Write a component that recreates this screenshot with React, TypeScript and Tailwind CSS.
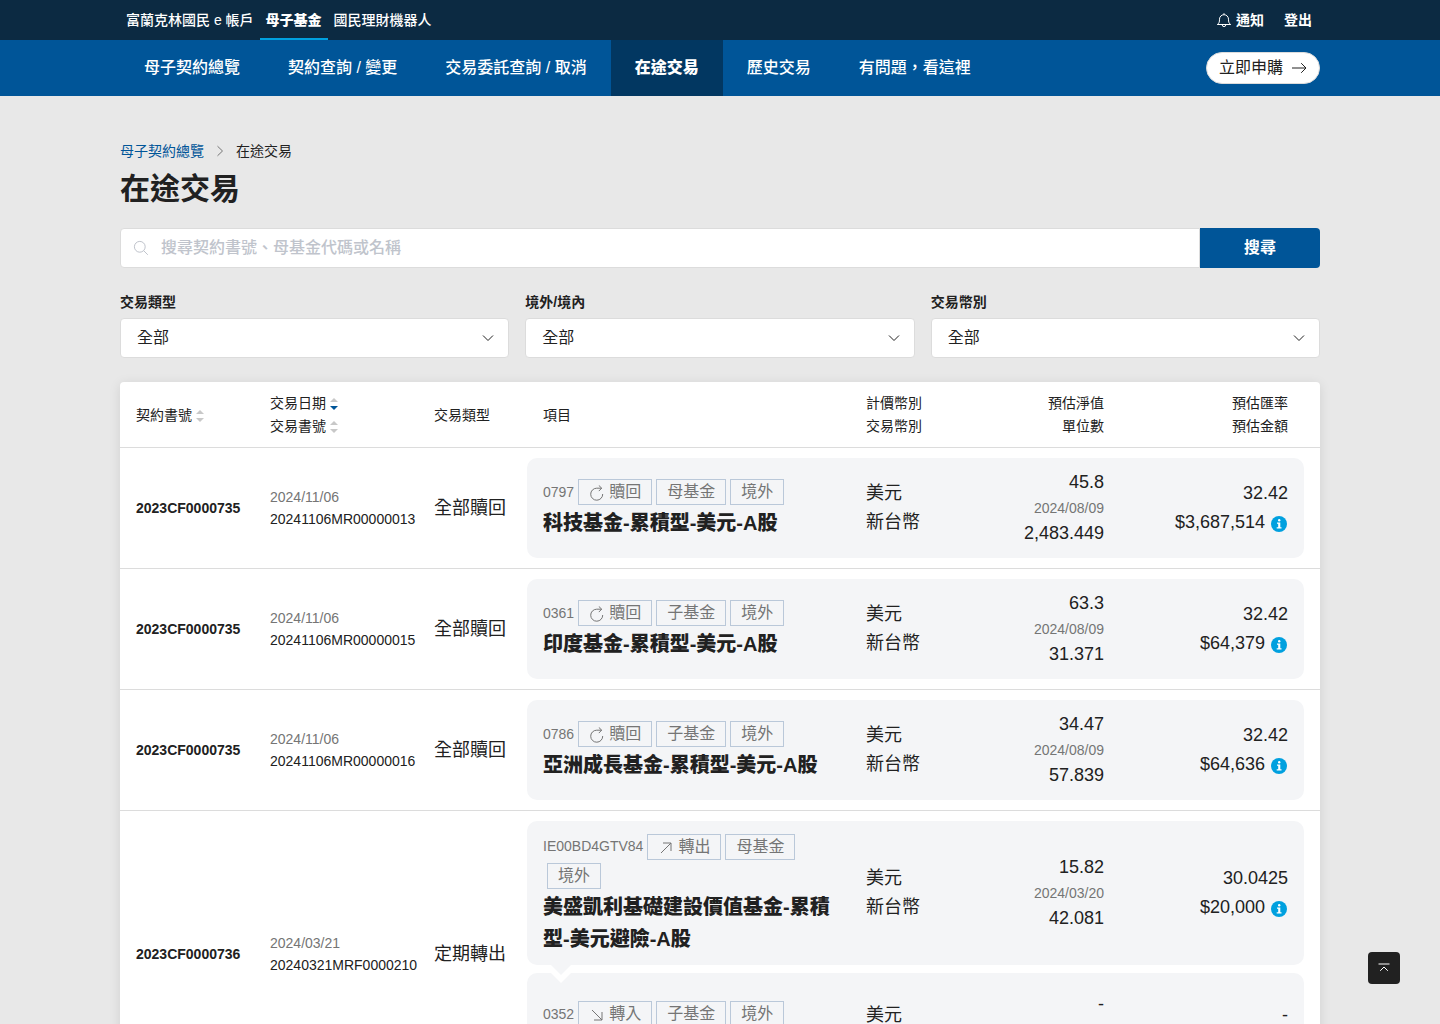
import React from "react";

const CJK = "font-['Liberation_Sans','Noto_Sans_CJK_TC',sans-serif]";

type IconName =
  | "bell" | "right" | "chevronRight" | "chevronDown" | "search"
  | "redeem" | "out" | "in" | "top";

const ICON_PATHS: Record<IconName, string> = {
  bell: "M1.2 12.5h13.6M1.5 12.3c1.6-1 2-2.3 2-5.1a4.5 4.5 0 0 1 9 0c0 2.8.4 4.1 2 5.1M8 2.6V1.2M6.2 12.8a1.8 1.8 0 0 0 3.6 0",
  right: "M1 8h14M10.2 3.2 15 8l-4.8 4.8",
  chevronRight: "M5.5 3.2 10.5 8l-5 4.8",
  chevronDown: "M3 5.5 8 10.5l5-5",
  search: "M12.2 6.8a5.4 5.4 0 1 1-10.8 0a5.4 5.4 0 0 1 10.8 0M10.7 10.7 14.8 14.8",
  redeem: "M13.7 9A6 6 0 1 1 7.7 3.2H12.7M9.8 0.4 12.7 3.2 9.8 6.1",
  out: "M3 13 13 3M5 3h8v8",
  in: "M3 3 13 13M13 5v8H5",
  top: "M2.5 4h11M4.2 10.8 8 7l3.8 3.8",
};

function Icon({ name, className = "size-4" }: { name: IconName; className?: string }) {
  return (
    <svg viewBox="0 0 16 16" fill="none" stroke="currentColor" strokeWidth="1" aria-hidden="true" className={`shrink-0 ${className}`}>
      <path d={ICON_PATHS[name]} />
    </svg>
  );
}

function InfoIcon() {
  return (
    <svg viewBox="0 0 16 16" className="size-4" aria-hidden="true">
      <circle cx="8" cy="8" r="8" fill="#00a0df" />
      <circle cx="8.2" cy="4.3" r="1.2" fill="#fff" />
      <path d="M6 6.6h3.3v4.6h1.2v1.2H5.7v-1.2h1.5V7.8H6z" fill="#fff" />
    </svg>
  );
}

function SortLabel({ text, sorted = false }: { text: string; sorted?: boolean }) {
  return (
    <button type="button" className="flex items-center gap-1">
      {text}
      <svg viewBox="0 0 8 12" className="mt-px h-3 w-2" aria-hidden="true">
        <path d="M0 4 4 0l4 4z" fill="#c8c8c8" />
        <path d="M0 8h8l-4 4z" fill={sorted ? "#005598" : "#c8c8c8"} />
      </svg>
    </button>
  );
}

interface Fund {
  code: string;
  action: string;
  icon: IconName;
  kind: string;
  name?: string;
  nav: string;
  date?: string;
  units: string;
  rate: string;
  amount: string;
}

interface Order {
  contract: string;
  date: string;
  serial: string;
  type: string;
  funds: Fund[];
}

const redeem = (code: string, kind: string, name: string, nav: string, units: string, amount: string): Fund => ({
  code, kind, name, nav, units, amount,
  action: "贖回", icon: "redeem", date: "2024/08/09", rate: "32.42",
});

const ORDERS: Order[] = [
  {
    contract: "2023CF0000735", date: "2024/11/06", serial: "20241106MR00000013", type: "全部贖回",
    funds: [redeem("0797", "母基金", "科技基金-累積型-美元-A股", "45.8", "2,483.449", "$3,687,514")],
  },
  {
    contract: "2023CF0000735", date: "2024/11/06", serial: "20241106MR00000015", type: "全部贖回",
    funds: [redeem("0361", "子基金", "印度基金-累積型-美元-A股", "63.3", "31.371", "$64,379")],
  },
  {
    contract: "2023CF0000735", date: "2024/11/06", serial: "20241106MR00000016", type: "全部贖回",
    funds: [redeem("0786", "子基金", "亞洲成長基金-累積型-美元-A股", "34.47", "57.839", "$64,636")],
  },
  {
    contract: "2023CF0000736", date: "2024/03/21", serial: "20240321MRF0000210", type: "定期轉出",
    funds: [
      {
        code: "IE00BD4GTV84", action: "轉出", icon: "out", kind: "母基金",
        name: "美盛凱利基礎建設價值基金-累積型-美元避險-A股",
        nav: "15.82", date: "2024/03/20", units: "42.081", rate: "30.0425", amount: "$20,000",
      },
      { code: "0352", action: "轉入", icon: "in", kind: "子基金", nav: "-", units: "-", rate: "-", amount: "-" },
    ],
  },
];

function Tag({ icon, children }: { icon?: IconName; children: React.ReactNode }) {
  return (
    <span className="mt-0.5 mb-px ml-1 flex h-[26px] items-center gap-1 border border-[#bac8d9] px-2.5 text-base leading-6">
      {icon && <Icon name={icon} className="mt-0.5 size-4" />}
      {children}
    </span>
  );
}

function FundCard({ fund, linked }: { fund: Fund; linked: boolean }) {
  return (
    <div
      className={`relative grid grid-cols-[1fr_88px_182px_184px] items-center rounded-[10px] bg-[#f4f5f7] text-lg leading-[29px] ${
        fund.name ? "py-[10px]" : "min-h-[114px]"
      }`}
    >
      <div className="px-4 pt-px">
        <div className="flex flex-wrap items-center text-[#757575]">
          <span className="text-sm">{fund.code}</span>
          <Tag icon={fund.icon}>{fund.action}</Tag>
          <Tag>{fund.kind}</Tag>
          <Tag>境外</Tag>
        </div>
        <p className="mt-px min-h-8 text-xl leading-8 font-black">{fund.name}</p>
      </div>
      <div className="px-4">
        <p>美元</p>
        <p>新台幣</p>
      </div>
      <div className="px-4 text-right">
        <p>{fund.nav}</p>
        <p className="min-h-[22px] text-sm leading-[22px] text-[#757575]">{fund.date}</p>
        <p>{fund.units}</p>
      </div>
      <div className="px-4 text-right">
        <p>{fund.rate}</p>
        <div className="flex items-center justify-end gap-1.5">
          {fund.amount}
          {fund.amount !== "-" && (
            <button type="button" aria-label="說明" className="mt-1 mr-px">
              <InfoIcon />
            </button>
          )}
        </div>
      </div>
      {linked && (
        <svg viewBox="0 0 20 18" className="absolute top-full left-6 z-10 h-[18px] w-5" aria-hidden="true">
          <path d="M0 8h20L10 18z" fill="#fff" />
          <path d="M0 0h20L10 10z" fill="#f4f5f7" />
        </svg>
      )}
    </div>
  );
}

function Filter({ id, label }: { id: string; label: string }) {
  return (
    <div>
      <label htmlFor={id} className="block text-sm leading-8 font-bold">{label}</label>
      <div className="relative">
        <select id={id} className="h-10 w-full appearance-none rounded border border-[#dcdcdc] bg-white px-4 text-base">
          <option>全部</option>
        </select>
        <Icon name="chevronDown" className="pointer-events-none absolute top-3 right-[13px] size-4 text-[#212121]" />
      </div>
    </div>
  );
}

const PRODUCTS = ["富蘭克林國民 e 帳戶", "母子基金", "國民理財機器人"];
const SECTIONS = ["母子契約總覽", "契約查詢 / 變更", "交易委託查詢 / 取消", "在途交易", "歷史交易", "有問題，看這裡"];

export default function App() {
  return (
    <div className={`min-h-screen bg-[#e8e8e8] text-[#212121] ${CJK}`}>
      <header className="text-white">
        <div className="bg-[#0c2a42]">
          <div className="mx-auto flex h-10 max-w-[1200px] justify-between text-sm">
            <nav className="flex">
              {PRODUCTS.map((p) => (
                <a
                  key={p}
                  href="#"
                  className={`border-b-2 px-1.5 leading-10 ${
                    p === "母子基金" ? "border-[#00a0df] font-black" : "border-transparent font-medium"
                  }`}
                >
                  {p}
                </a>
              ))}
            </nav>
            <div className="flex items-center gap-5 px-2 font-semibold">
              <a href="#" className="flex items-center gap-1">
                <Icon name="bell" />
                通知
              </a>
              <a href="#">登出</a>
            </div>
          </div>
        </div>
        <div className="bg-[#005598]">
          <div className="mx-auto flex h-14 max-w-[1200px] items-center justify-between">
            <nav className="flex">
              {SECTIONS.map((s) => (
                <a
                  key={s}
                  href="#"
                  className={`px-6 text-base leading-[56px] ${s === "在途交易" ? "bg-[#023761] font-black" : "font-medium"}`}
                >
                  {s}
                </a>
              ))}
            </nav>
            <button type="button" className="flex h-8 items-center gap-2 rounded-full border border-[#dcdcdc] bg-white px-3 text-base text-[#212121]">
              立即申購
              <Icon name="right" />
            </button>
          </div>
        </div>
      </header>

      <main className="mx-auto max-w-[1200px] pt-11 pb-10">
        <nav className="flex h-[22px] items-center gap-2 text-sm">
          <a href="#" className="text-[#005598]">母子契約總覽</a>
          <Icon name="chevronRight" className="size-4 text-[#757575]" />
          <span>在途交易</span>
        </nav>
        <h1 className="mt-1 text-3xl leading-[45px] font-bold">在途交易</h1>

        <form className="mt-[17px] flex h-10" onSubmit={(e) => e.preventDefault()}>
          <div className="relative flex-1">
            <Icon name="search" className="absolute top-3 left-[13px] size-4 text-[#c0c4cc]" />
            <input
              type="search"
              aria-label="搜尋"
              placeholder="搜尋契約書號、母基金代碼或名稱"
              className="h-10 w-full rounded-l border border-[#dcdcdc] bg-white pr-4 pl-10 text-base font-medium placeholder:text-[#c0c4cc]"
            />
          </div>
          <button type="submit" className="w-[120px] rounded-r bg-[#005598] text-base font-bold text-white">搜尋</button>
        </form>

        <div className="mt-[18px] grid grid-cols-3 gap-4">
          <Filter id="type" label="交易類型" />
          <Filter id="region" label="境外/境內" />
          <Filter id="currency" label="交易幣別" />
        </div>

        <div className="mt-6 rounded bg-white shadow-[0_2px_12px_rgba(0,0,0,0.1)]">
          <table className="w-full table-fixed text-left text-sm leading-[23px]">
            <colgroup>
              <col className="w-[134px]" />
              <col className="w-[164px]" />
              <col className="w-[109px]" />
              <col />
              <col className="w-[88px]" />
              <col className="w-[182px]" />
              <col className="w-[200px]" />
            </colgroup>
            <thead>
              <tr className="h-[65px] border-b border-[#dcdcdc] *:px-4 *:pt-0.5 *:font-normal">
                <th><SortLabel text="契約書號" /></th>
                <th>
                  <SortLabel text="交易日期" sorted />
                  <SortLabel text="交易書號" />
                </th>
                <th>交易類型</th>
                <th>項目</th>
                <th><p className="whitespace-nowrap">計價幣別</p><p className="whitespace-nowrap">交易幣別</p></th>
                <th className="text-right"><p>預估淨值</p><p>單位數</p></th>
                <th className="pr-8! text-right"><p>預估匯率</p><p>預估金額</p></th>
              </tr>
            </thead>
            <tbody>
              {ORDERS.map((o) => (
                <tr key={o.serial} className="border-b border-[#dcdcdc]">
                  <td className="px-4 pt-0.5 font-bold">{o.contract}</td>
                  <td className="pl-4 leading-[22px]">
                    <p className="text-[#757575]">{o.date}</p>
                    <p>{o.serial}</p>
                  </td>
                  <td className="pl-4 text-lg">{o.type}</td>
                  <td colSpan={4} className="py-2.5 pr-4">
                    <div className="flex flex-col gap-2">
                      {o.funds.map((f, i) => (
                        <FundCard key={f.code} fund={f} linked={i < o.funds.length - 1} />
                      ))}
                    </div>
                  </td>
                </tr>
              ))}
            </tbody>
          </table>
        </div>
      </main>

      <button
        type="button"
        aria-label="回到頂端"
        className="fixed right-10 bottom-10 flex size-8 items-center justify-center rounded bg-[#212121] text-white"
      >
        <Icon name="top" className="size-4" />
      </button>
    </div>
  );
}
